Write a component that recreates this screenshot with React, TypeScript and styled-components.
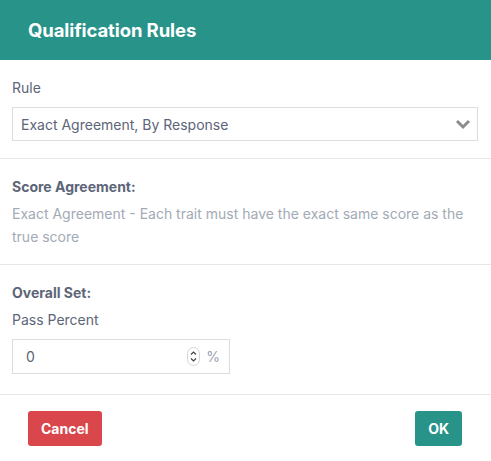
import styled, { createGlobalStyle } from "styled-components";

const GlobalStyle = createGlobalStyle`
	body {
		margin: 0;
		background: #ffffff;
		font-family: Inter, "Noto Sans", "Liberation Sans", sans-serif;
		-webkit-font-smoothing: antialiased;
	}
`;

const Modal = styled.div`
	width: 491px;
	background: #ffffff;
`;

const Header = styled.div`
	height: 60px;
	display: flex;
	align-items: center;
	padding-left: 28px;
	background: #279389;
`;

const Title = styled.h1`
	margin: 0;
	color: #ffffff;
	font-size: 18.5px;
	font-weight: 700;
	letter-spacing: -0.1px;
`;

const Section = styled.div<{ bottom: number }>`
	padding: 18px 13px ${props => props.bottom}px 12px;
	border-bottom: 1px solid #e6e6e6;
`;

const Label = styled.div<{ gap?: number }>`
	font-size: 14px;
	line-height: 20px;
	color: #5c6577;
	margin-bottom: ${props => props.gap ?? 0}px;
`;

const Heading = styled.div<{ gap: number }>`
	font-size: 14px;
	line-height: 20px;
	font-weight: 700;
	color: #5c6577;
	margin-bottom: ${props => props.gap}px;
`;

const Description = styled.p`
	margin: 0;
	font-size: 14px;
	line-height: 23px;
	color: #a3aab5;
`;

const Select = styled.div`
	height: 34px;
	box-sizing: border-box;
	border: 1px solid #dddddd;
	display: flex;
	align-items: center;
	justify-content: space-between;
	padding: 0 6px 0 8px;
	font-size: 14px;
	color: #5c6577;
`;

const NumberBox = styled.div`
	width: 218px;
	height: 35px;
	box-sizing: border-box;
	border: 1px solid #dddddd;
	display: flex;
	align-items: center;
	padding: 0 9px 0 13px;
	font-size: 14px;
	color: #5c6577;
`;

const Value = styled.span`
	flex: 1;
`;

const Unit = styled.span`
	margin-left: 6px;
	color: #9aa1ac;
`;

const Footer = styled.div`
	display: flex;
	justify-content: space-between;
	padding: 16px 29px 0 28px;
`;

const Button = styled.button<{ tone: "danger" | "primary" }>`
	height: 35px;
	border: none;
	border-radius: 3px;
	padding: 0 13px;
	font-family: inherit;
	font-size: 14px;
	font-weight: 700;
	color: #ffffff;
	background: ${props => (props.tone === "danger" ? "#d9464c" : "#279389")};
`;

const Chevron = () => (
	<svg width="16" height="12" viewBox="0 0 16 12">
		<path d="M2 3 L8 9 L14 3" fill="none" stroke="#8c8c8c" strokeWidth="3" />
	</svg>
);

const Spinner = () => (
	<svg width="13" height="19" viewBox="0 0 13 19">
		<rect x="0.5" y="0.5" width="12" height="18" rx="6" fill="none" stroke="#d4d4d4" />
		<path d="M4 7.5 L6.5 5 L9 7.5" fill="none" stroke="#444" strokeWidth="1.2" />
		<path d="M4 11.5 L6.5 14 L9 11.5" fill="none" stroke="#444" strokeWidth="1.2" />
	</svg>
);

const App = () => {
	return (
		<Modal>
			<GlobalStyle />
			<Header>
				<Title>Qualification Rules</Title>
			</Header>
			<Section bottom={17}>
				<Label gap={9}>Rule</Label>
				<Select>
					<span>Exact Agreement, By Response</span>
					<Chevron />
				</Select>
			</Section>
			<Section bottom={16}>
				<Heading gap={5}>Score Agreement:</Heading>
				<Description>
					Exact Agreement - Each trait must have the exact same score as the true score
				</Description>
			</Section>
			<Section bottom={20}>
				<Heading gap={7}>Overall Set:</Heading>
				<Label gap={9}>Pass Percent</Label>
				<NumberBox>
					<Value>0</Value>
					<Spinner />
					<Unit>%</Unit>
				</NumberBox>
			</Section>
			<Footer>
				<Button tone="danger">Cancel</Button>
				<Button tone="primary">OK</Button>
			</Footer>
		</Modal>
	);
};

export default App;
